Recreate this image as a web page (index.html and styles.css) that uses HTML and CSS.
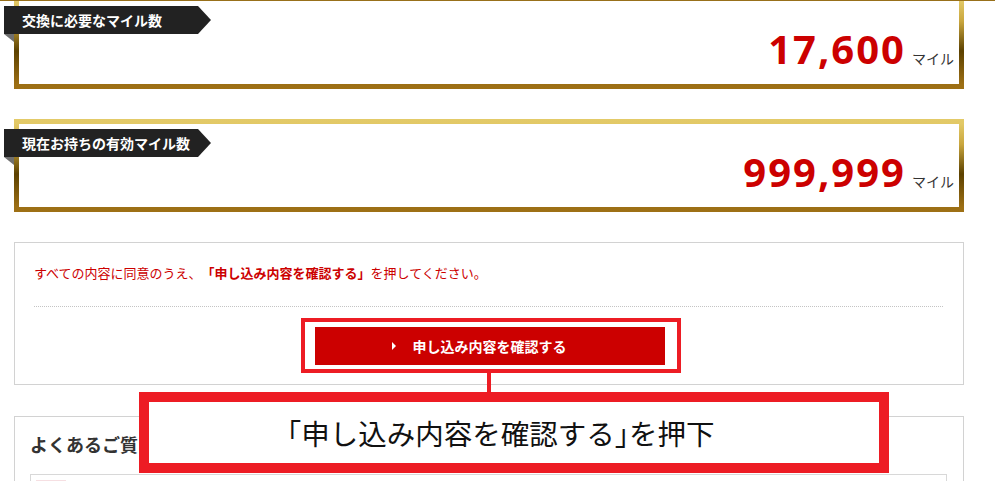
FILE: index.html
```html
<!DOCTYPE html>
<html lang="ja">

<head>
  <meta charset="UTF-8" />
  <title>マイル交換 申し込み</title>
  <meta name="viewport" content="width=device-width, initial-scale=1.0" />
  <link rel="stylesheet" href="styles.css">
</head>

<body>
  <div class="topbar"></div>

  <main class="page">
    <section class="mile-box mile-box--first">
      <div class="ribbon">交換に必要なマイル数</div>
      <div class="amount">
        <span class="amount-num">17,600</span>
        <span class="amount-unit">マイル</span>
      </div>
    </section>

    <section class="mile-box">
      <div class="ribbon">現在お持ちの有効マイル数</div>
      <div class="amount">
        <span class="amount-num">999,999</span>
        <span class="amount-unit">マイル</span>
      </div>
    </section>

    <section class="confirm">
      <p class="confirm-text">すべての内容に同意のうえ、<strong>「申し込み内容を確認する」</strong>を押してください。</p>
      <div class="confirm-action">
        <button type="button" class="btn-confirm"><span>申し込み内容を確認する</span></button>
      </div>
    </section>

    <section class="faq">
      <h2 class="faq-title">よくあるご質問</h2>
      <div class="faq-item">
        <span class="faq-q"></span>
      </div>
    </section>
  </main>

  <!-- annotation layer -->
  <div class="note-frame"></div>
  <div class="note-line"></div>
  <div class="note-callout">「申し込み内容を確認する」を押下</div>
</body>

</html>
```

FILE: styles.css
```css
* {
  box-sizing: border-box;
  margin: 0;
  padding: 0;
}

body {
  position: relative;
  font-family: "Noto Sans CJK JP", "Noto Sans", sans-serif;
  background: #fff;
  color: #333;
  overflow: hidden;
}

.topbar {
  position: relative;
  z-index: 1;
  height: 1px;
  background: #98701a;
}

.page {
  width: 950px;
  margin-left: 14px;
}

/* gold framed mile boxes */
.mile-box {
  position: relative;
  border: 5px solid #9e7015;
  border-image: linear-gradient(to bottom, #e3ca68 0%, #c9a63e 25%, #5c4100 60%, #9e7015 100%) 1;
  padding: 28px 5px 15px;
  margin-bottom: 30px;
}

.mile-box--first {
  margin-top: -5px;
}

.ribbon {
  position: absolute;
  top: 5px;
  left: -15px;
  width: 194px;
  height: 28px;
  padding-left: 18px;
  background: #222;
  color: #fff;
  font-size: 14px;
  font-weight: bold;
  line-height: 28px;
}

.ribbon::after {
  content: "";
  position: absolute;
  top: 0;
  left: 100%;
  border-left: 13px solid #222;
  border-top: 14px solid transparent;
  border-bottom: 14px solid transparent;
}

.ribbon::before {
  content: "";
  position: absolute;
  top: 100%;
  left: 0;
  border-top: 8px solid #707070;
  border-left: 10px solid transparent;
}

.amount {
  display: flex;
  justify-content: flex-end;
  align-items: baseline;
  line-height: 40px;
}

.amount-num {
  font-family: "Noto Sans", sans-serif;
  font-size: 40px;
  font-weight: bold;
  color: #cc0000;
  letter-spacing: 2px;
}

.amount-unit {
  margin-left: 6px;
  font-size: 14px;
  line-height: 1;
  color: #333;
}

/* confirm block */
.confirm {
  border: 1px solid #d2d2d2;
  padding: 20px 20px 19px 19px;
  margin-bottom: 31px;
}

.confirm-text {
  font-size: 13px;
  line-height: 20px;
  color: #cc0000;
  padding-bottom: 23px;
  border-bottom: 1px dotted #c4c4c4;
  text-spacing-trim: space-all;
}

.confirm-action {
  display: flex;
  justify-content: center;
  padding-top: 20px;
}

.btn-confirm {
  width: 350px;
  height: 38px;
  margin-left: 2px;
  border: none;
  background: #cc0000;
  color: #fff;
  font-family: inherit;
  font-size: 14px;
  font-weight: bold;
  cursor: pointer;
}

.btn-confirm span {
  position: relative;
}

.btn-confirm span::before {
  content: "";
  position: absolute;
  left: -21px;
  top: 50%;
  margin-top: -4px;
  border-left: 4px solid #fff;
  border-top: 4px solid transparent;
  border-bottom: 4px solid transparent;
}

/* faq */
.faq {
  border: 1px solid #d2d2d2;
  padding: 15px 16px 20px 15px;
}

.faq-title {
  font-size: 18px;
  line-height: 24px;
  font-weight: bold;
  color: #333;
}

.faq-item {
  margin-top: 18px;
  height: 60px;
  border: 1px solid #d8d8d8;
}

.faq-q {
  display: block;
  width: 30px;
  height: 20px;
  margin: 5px 0 0 5px;
  background: #f6dfe2;
}

/* annotations */
.note-frame {
  position: absolute;
  left: 301px;
  top: 318px;
  width: 380px;
  height: 55px;
  border: 4px solid #ed1c24;
}

.note-line {
  position: absolute;
  left: 487px;
  top: 373px;
  width: 4px;
  height: 19px;
  background: #ed1c24;
}

.note-callout {
  position: absolute;
  left: 139px;
  top: 392px;
  width: 750px;
  height: 81px;
  padding-left: 138px;
  border: 10px solid #ed1c24;
  background: #fff;
  color: #111;
  font-size: 28.5px;
  line-height: 61px;
  font-feature-settings: "halt";
}
```
